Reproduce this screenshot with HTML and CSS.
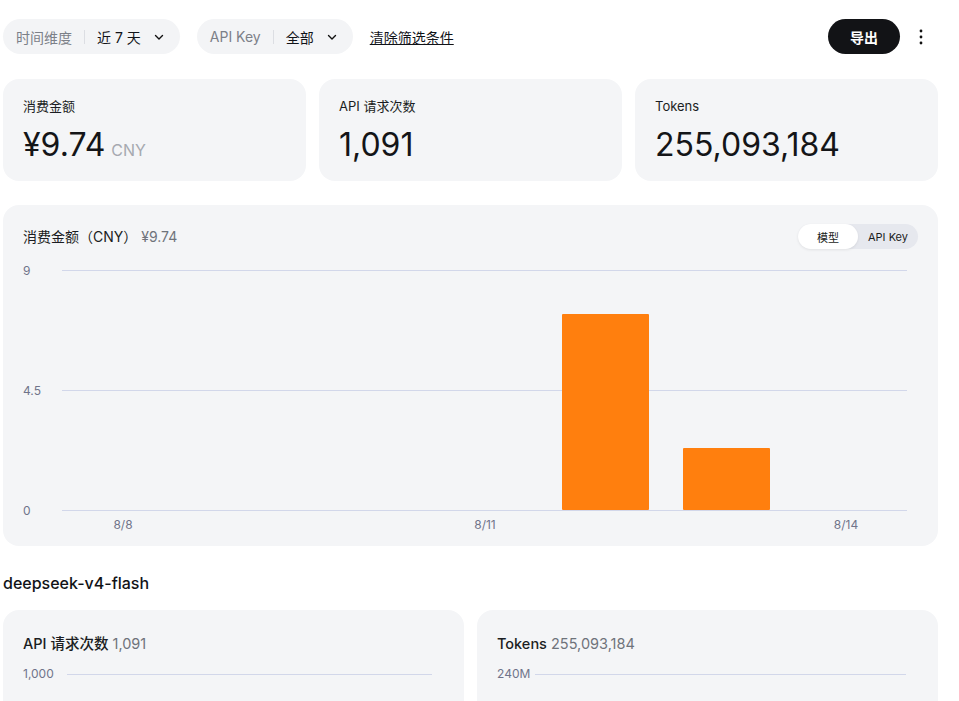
FILE: index.html
```html
<!DOCTYPE html>
<html lang="zh-CN">
<head>
    <meta charset="UTF-8">
    <meta name="viewport" content="width=device-width, initial-scale=1.0">
    <title>用量</title>
    <link rel="stylesheet" href="styles.css">
</head>
<body>

<div class="toolbar">
    <div class="filter">
        <span class="filter-label">时间维度</span>
        <span class="filter-sep"></span>
        <span class="filter-value">近 7 天</span>
        <svg class="chevron" width="12" height="12" viewBox="0 0 12 12"><path d="M2.5 4.5 6 8l3.5-3.5" fill="none" stroke="#111" stroke-width="1.4" stroke-linecap="round" stroke-linejoin="round"/></svg>
    </div>
    <div class="filter">
        <span class="filter-label">API Key</span>
        <span class="filter-sep"></span>
        <span class="filter-value">全部</span>
        <svg class="chevron" width="12" height="12" viewBox="0 0 12 12"><path d="M2.5 4.5 6 8l3.5-3.5" fill="none" stroke="#111" stroke-width="1.4" stroke-linecap="round" stroke-linejoin="round"/></svg>
    </div>
    <a class="clear-link" href="#">清除筛选条件</a>
    <div class="toolbar-right">
        <button class="export-btn">导出</button>
        <svg class="more" width="16" height="20" viewBox="0 0 16 20"><circle cx="8" cy="4" r="1.4" fill="#111"/><circle cx="8" cy="10" r="1.4" fill="#111"/><circle cx="8" cy="16" r="1.4" fill="#111"/></svg>
    </div>
</div>

<div class="stats">
    <div class="card stat">
        <div class="stat-label">消费金额</div>
        <div class="stat-value">¥9.74<span class="unit">CNY</span></div>
    </div>
    <div class="card stat">
        <div class="stat-label">API 请求次数</div>
        <div class="stat-value">1,091</div>
    </div>
    <div class="card stat">
        <div class="stat-label">Tokens</div>
        <div class="stat-value">255,093,184</div>
    </div>
</div>

<div class="card chart-card">
    <div class="chart-head">
        <div class="chart-title">消费金额（CNY） <span class="muted">¥9.74</span></div>
        <div class="toggle">
            <span class="toggle-item active">模型</span>
            <span class="toggle-item">API Key</span>
        </div>
    </div>
    <svg class="chart" width="895" height="277" viewBox="0 0 895 277">
        <g class="grid">
            <line x1="39" y1="11.5" x2="884" y2="11.5"/>
            <line x1="39" y1="131.5" x2="884" y2="131.5"/>
            <line x1="39" y1="251.5" x2="884" y2="251.5"/>
        </g>
        <g class="axis">
            <text x="0" y="16">9</text>
            <text x="0" y="136">4.5</text>
            <text x="0" y="256">0</text>
            <text x="100" y="270" text-anchor="middle">8/8</text>
            <text x="462" y="270" text-anchor="middle">8/11</text>
            <text x="823" y="270" text-anchor="middle">8/14</text>
        </g>
        <rect x="539" y="55" width="87" height="196" rx="1" fill="#ff7f0e"/>
        <rect x="660" y="189" width="87" height="62" rx="1" fill="#ff7f0e"/>
    </svg>
</div>

<h3 class="section-title">deepseek-v4-flash</h3>

<div class="model-charts">
    <div class="card small-card">
        <div class="small-title"><b>API 请求次数</b> <span class="muted">1,091</span></div>
        <svg class="chart" width="420" height="120" viewBox="0 0 420 120">
            <line class="gridline" x1="44" y1="10.5" x2="409" y2="10.5"/>
            <text class="axis-text" x="0" y="14">1,000</text>
        </svg>
    </div>
    <div class="card small-card">
        <div class="small-title"><b>Tokens</b> <span class="muted">255,093,184</span></div>
        <svg class="chart" width="420" height="120" viewBox="0 0 420 120">
            <line class="gridline" x1="38" y1="10.5" x2="409" y2="10.5"/>
            <text class="axis-text" x="0" y="14">240M</text>
        </svg>
    </div>
</div>

</body>
</html>
```

FILE: styles.css
```css
html {
    overflow: hidden;
}
body {
    font-family: Inter, "Noto Sans CJK SC", sans-serif;
    color: #111318;
    margin: 0;
    padding: 19px 21px 0 3px;
    background: #fff;
}
.toolbar {
    display: flex;
    align-items: center;
    height: 35px;
    gap: 17px;
}
.filter {
    display: flex;
    align-items: center;
    height: 35px;
    padding: 0 15px 0 13px;
    background: #f3f4f6;
    border-radius: 18px;
    font-size: 14px;
}
.filter-label {
    color: #7c8088;
}
.filter-sep {
    width: 1px;
    height: 14px;
    background: #dcdee3;
    margin: 0 12px;
}
.filter-value {
    color: #111318;
}
.chevron {
    margin-left: 12px;
}
.clear-link {
    color: #111318;
    font-size: 14px;
    text-decoration: underline;
}
.toolbar-right {
    margin-left: auto;
    display: flex;
    align-items: center;
    gap: 13px;
}
.export-btn {
    height: 35px;
    width: 72px;
    border: none;
    border-radius: 18px;
    background: #121316;
    color: #fff;
    font-family: inherit;
    font-size: 14px;
    font-weight: 700;
}
.more {
    margin-right: 9px;
}
.card {
    background: #f4f5f7;
    border-radius: 16px;
}
.stats {
    display: grid;
    grid-template-columns: repeat(3, 1fr);
    gap: 13px;
    margin-top: 25px;
}
.stat {
    height: 102px;
    padding: 18px 20px 0;
    box-sizing: border-box;
}
.stat-label {
    font-size: 13px;
    line-height: 18px;
    color: #1b1d22;
}
.stat-value {
    font-size: 32px;
    line-height: 38px;
    margin-top: 11px;
    color: #141518;
}
.unit {
    font-size: 16px;
    color: #a6a9b0;
    margin-left: 6px;
}
.chart-card {
    margin-top: 24px;
    padding: 19px 20px 10px;
}
.chart-head {
    display: flex;
    justify-content: space-between;
    align-items: center;
    height: 25px;
    margin-bottom: 10px;
}
.chart-title {
    font-size: 14px;
    line-height: 18px;
    color: #1b1d22;
}
.small-title {
    font-size: 14.5px;
    line-height: 18px;
    color: #1b1d22;
}
.small-title b {
    font-weight: 500;
}
.muted {
    color: #6f737b;
}
.toggle {
    display: flex;
    background: #e6e8ee;
    border-radius: 13px;
    font-size: 11px;
    height: 25px;
}
.toggle-item {
    display: flex;
    align-items: center;
    justify-content: center;
    width: 60px;
    border-radius: 13px;
    color: #1b1d22;
}
.toggle-item.active {
    background: #fff;
    box-shadow: 0 1px 3px rgba(0, 0, 0, 0.08);
}
.chart {
    display: block;
}
.grid line, .gridline {
    stroke: #d2d7ea;
    stroke-width: 1;
}
.axis text, .axis-text {
    font-family: Inter, sans-serif;
    font-size: 12px;
    fill: #70748a;
}
.section-title {
    font-size: 16px;
    font-weight: 500;
    margin: 27px 0 17px;
    line-height: 20px;
    color: #111318;
}
.model-charts {
    display: grid;
    grid-template-columns: 1fr 1fr;
    gap: 13px;
}
.small-card {
    padding: 25px 20px 0;
    height: 200px;
}
.small-card .chart {
    margin-top: 11px;
}
```
